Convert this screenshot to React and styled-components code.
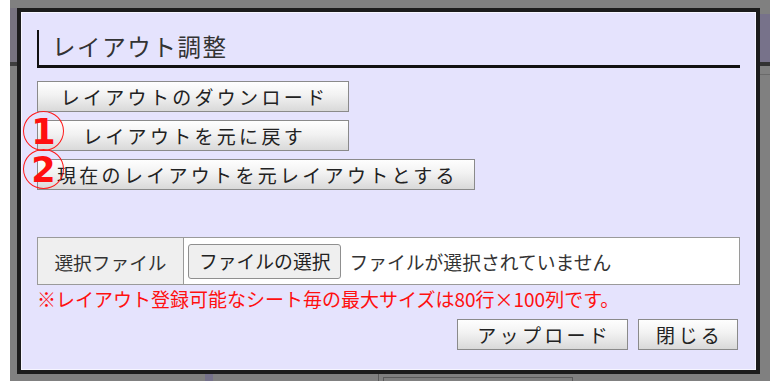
import React from "react";
import styled, { createGlobalStyle } from "styled-components";

const Global = createGlobalStyle`
  html, body { margin: 0; padding: 0; background: #ffffff; }
  body { width: 770px; height: 381px; overflow: hidden; }
  * { box-sizing: border-box; }
`;

const FONT = `"Noto Sans CJK JP", "Noto Sans", sans-serif`;

const Page = styled.div`
  display: flex;
  width: 770px;
  height: 381px;
  padding-left: 10px;
  background: #ffffff;
`;

const Backdrop = styled.div`
  position: relative;
  flex: 1;
  height: 381px;
  background: #808080;
  padding: 8px 0 0 7px;
`;

const Ghost = styled.div`
  position: absolute;
  left: ${(p) => p.$x}px;
  top: ${(p) => p.$y}px;
  width: ${(p) => p.$w}px;
  height: ${(p) => p.$h}px;
  background: ${(p) => p.$bg || "transparent"};
  border: ${(p) => p.$border || "none"};
`;

const Modal = styled.div`
  position: relative;
  width: 743px;
  height: 366px;
  border: 4px solid #1c1c1c;
  background: #e5e3fd;
  box-shadow: inset 0 0 0 1px #f6f5ff;
  padding: 18px 16px 0 16px;
  display: flex;
  flex-direction: column;
  font-family: ${FONT};
`;

const Heading = styled.h2`
  margin: 0;
  height: 38px;
  border-left: 2px solid #111;
  border-bottom: 3px solid #111;
  padding-left: 13px;
  padding-bottom: 2px;
  display: flex;
  align-items: center;
  font-size: 23.5px;
  font-weight: 400;
  letter-spacing: 1.6px;
  color: #333;
  line-height: 1;
`;

const Stack = styled.div`
  display: flex;
  flex-direction: column;
  align-items: flex-start;
  gap: 8px;
  margin-top: 13px;
`;

const Button = styled.button`
  height: 31px;
  width: ${(p) => (p.$w ? `${p.$w}px` : "auto")};
  padding: 0 ${(p) => (p.$pad ?? 16)}px 0 ${(p) => (p.$pad ?? 16) + 3}px;
  border: 1px solid #8a8a8a;
  border-radius: 0;
  background: linear-gradient(#fefefe, #f2f2f2 45%, #d9d9d9);
  font-family: ${FONT};
  font-size: 19px;
  letter-spacing: 3.3px;
  color: #222;
  line-height: 1;
  display: flex;
  align-items: center;
  justify-content: center;
  white-space: nowrap;
`;

const FileRow = styled.div`
  margin-top: 47px;
  height: 48px;
  display: flex;
  border: 1px solid #9a9a9a;
  background: #ffffff;
`;

const FileLabel = styled.div`
  width: 146px;
  background: #efefef;
  border-right: 1px solid #9a9a9a;
  display: flex;
  align-items: center;
  justify-content: center;
  font-size: 18.7px;
  color: #333;
`;

const FileField = styled.div`
  flex: 1;
  display: flex;
  align-items: center;
  padding-left: 4px;
  gap: 8px;
  font-size: 18.8px;
  color: #333;
`;

const ChooseButton = styled.button`
  height: 35px;
  padding: 0 10px;
  border: 1px solid #8f8f8f;
  border-radius: 3px;
  background: #efefef;
  font-family: ${FONT};
  font-size: 18.8px;
  color: #222;
  line-height: 1;
`;

const Note = styled.p`
  margin: 2px 0 0 0;
  font-size: 19px;
  line-height: 24px;
  color: #ff1010;
  white-space: nowrap;
`;

const Footer = styled.div`
  display: flex;
  justify-content: flex-end;
  gap: 10px;
  margin-top: 8px;
  margin-right: 2px;
`;

const Marker = styled.div`
  position: absolute;
  left: 2px;
  top: ${(p) => p.$top}px;
  width: 41px;
  height: 40px;
  border: 1.6px solid #ff1a1a;
  border-radius: 50%;
  display: flex;
  align-items: center;
  justify-content: center;
  font-family: "DejaVu Sans", sans-serif;
  font-weight: 700;
  font-size: 35px;
  line-height: 1;
  color: #ff1010;
  padding-top: 2px;
`;

export default function App() {
  return (
    <>
      <Global />
      <Page>
        <Backdrop>
          <Ghost $x={0} $y={8} $w={7} $h={54} $bg="#77737f" />
          <Ghost $x={0} $y={62} $w={7} $h={4} $bg="#3e3e3e" />
          <Ghost $x={750} $y={14} $w={10} $h={48} $bg="#77728a" />
          <Ghost $x={750} $y={62} $w={10} $h={4} $bg="#333333" />
          <Ghost $x={750} $y={74} $w={10} $h={1} $bg="#6a6a6a" />
          <Ghost $x={195} $y={374} $w={8} $h={7} $bg="#75718a" />
          <Ghost $x={368} $y={374} $w={1} $h={7} $bg="#5a5a5a" />
          <Ghost $x={373} $y={377} $w={190} $h={6} $border="1px solid #5a5a5a" />
          <Modal>
            <Heading>レイアウト調整</Heading>
            <Stack>
              <Button $w={312}>レイアウトのダウンロード</Button>
              <Button $w={312}>レイアウトを元に戻す</Button>
              <Button>現在のレイアウトを元レイアウトとする</Button>
            </Stack>
            <FileRow>
              <FileLabel>選択ファイル</FileLabel>
              <FileField>
                <ChooseButton>ファイルの選択</ChooseButton>
                <span>ファイルが選択されていません</span>
              </FileField>
            </FileRow>
            <Note>※レイアウト登録可能なシート毎の最大サイズは80行×100列です。</Note>
            <Footer>
              <Button $pad={16}>アップロード</Button>
              <Button $pad={14}>閉じる</Button>
            </Footer>
            <Marker $top={99}>1</Marker>
            <Marker $top={137}>2</Marker>
          </Modal>
        </Backdrop>
      </Page>
    </>
  );
}
